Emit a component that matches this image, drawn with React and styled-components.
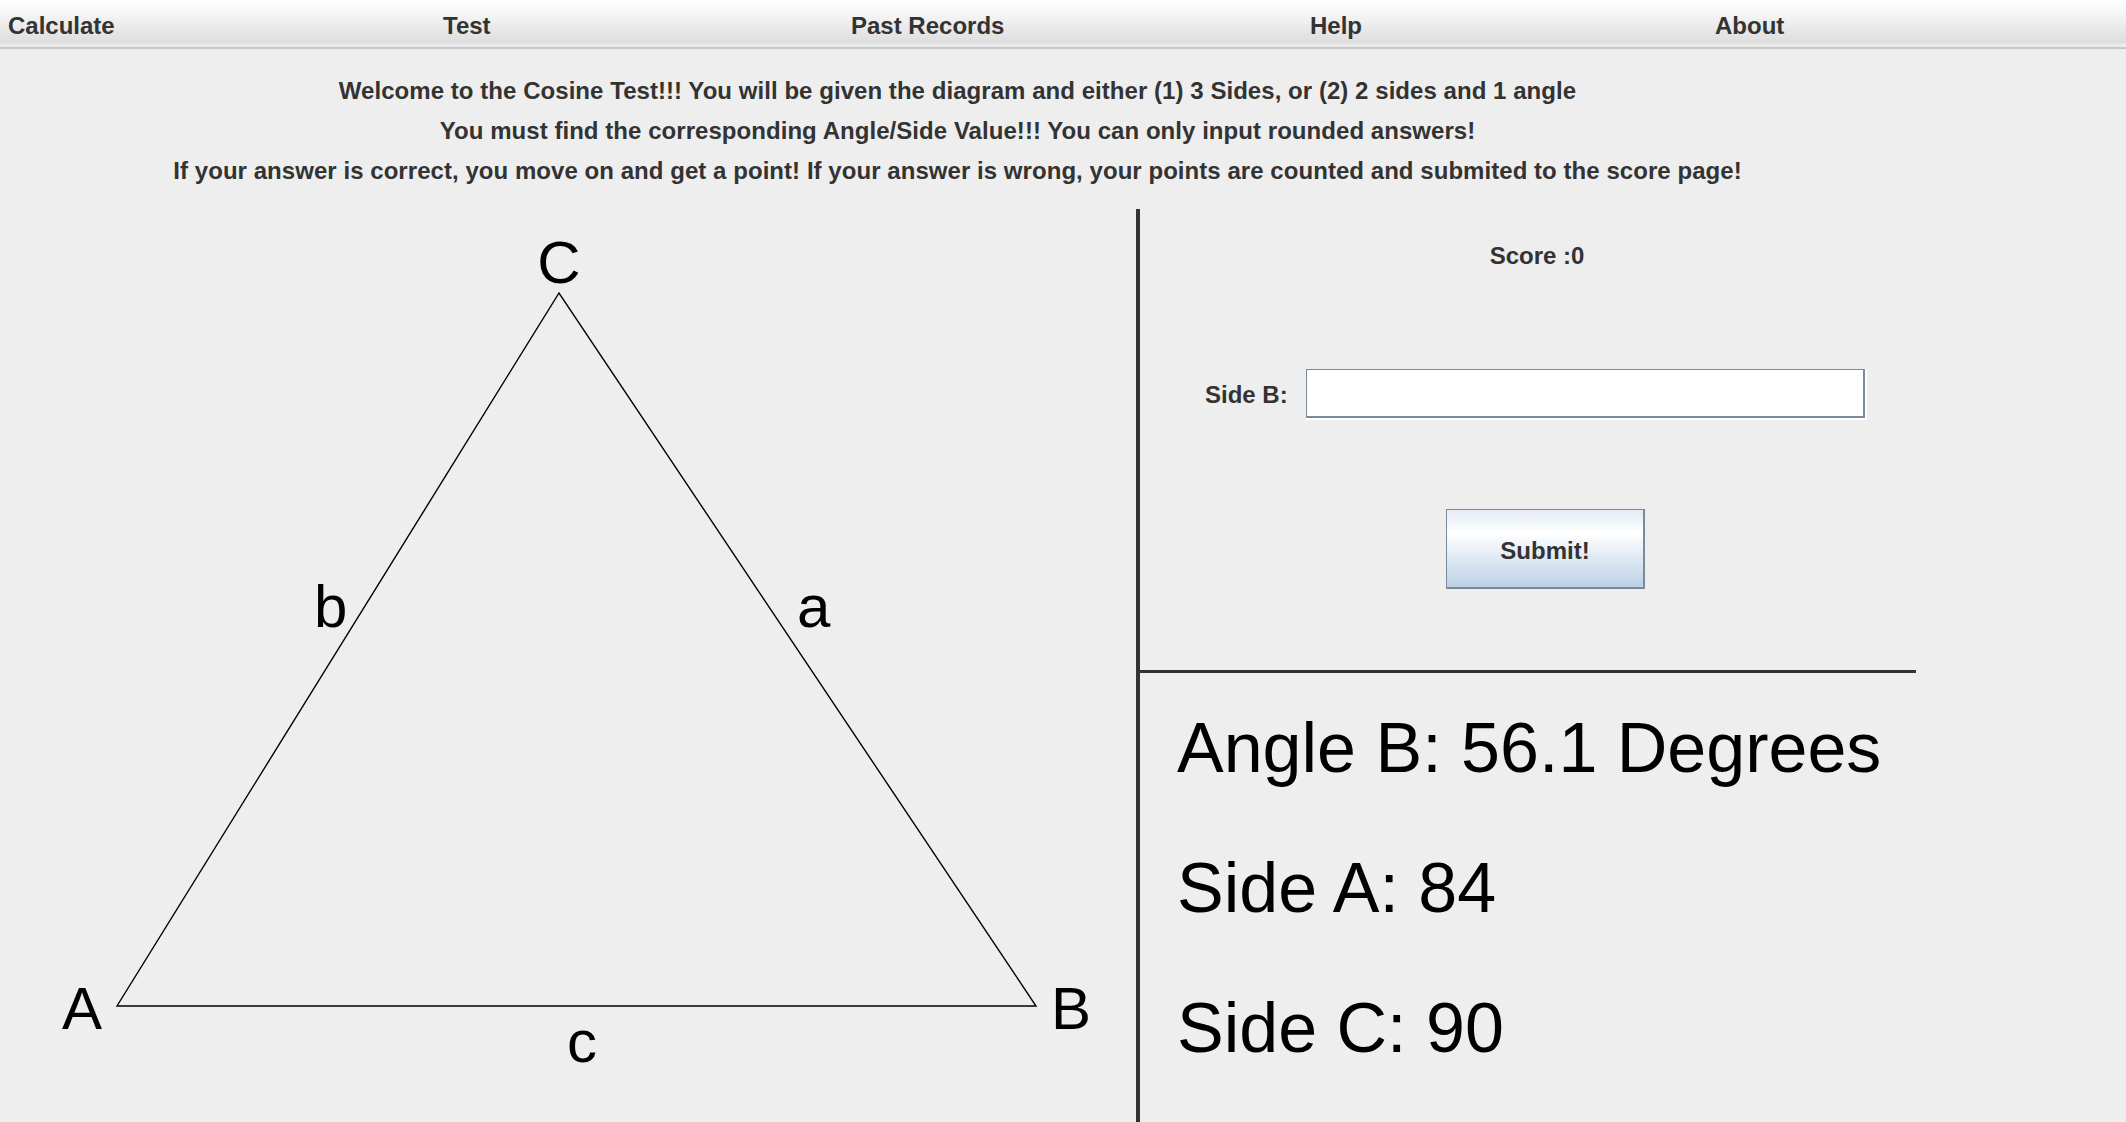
import React from "react";
import styled, { createGlobalStyle } from "styled-components";

const GlobalStyle = createGlobalStyle`
  html, body {
    margin: 0;
    padding: 0;
    background: #eeeeee;
    font-family: "Liberation Sans", Arial, sans-serif;
    overflow: hidden;
  }
  * { box-sizing: border-box; }
`;

const Page = styled.div`
  width: 2126px;
  height: 1122px;
  background: #eeeeee;
  display: flex;
  flex-direction: column;
`;

const MenuBar = styled.nav`
  height: 49px;
  padding-left: 8px;
  display: grid;
  grid-template-columns: 435px 408px 459px 405px auto;
  align-items: center;
  background: linear-gradient(to bottom, #ffffff 0%, #f1f1f1 40%, #dddddd 92%, #eaeaea 93%, #eaeaea 100%);
  border-bottom: 2px solid #c9c9c9;
`;

const MenuItem = styled.div`
  font-size: 24px;
  font-weight: bold;
  color: #333333;
  line-height: 47px;
  padding-top: 2px;
  white-space: nowrap;
`;

const Header = styled.header`
  width: 1915px;
  padding-top: 22px;
  height: 160px;
  text-align: center;
`;

const InfoLine = styled.p`
  margin: 0;
  font-size: 24px;
  font-weight: bold;
  color: #333333;
  line-height: 40px;
  letter-spacing: 0.05px;
  white-space: nowrap;
`;

const Main = styled.main`
  flex: 1;
  display: flex;
  min-height: 0;
`;

const DiagramPanel = styled.section`
  width: 1140px;
  border-right: 4px solid #333333;
  height: 100%;
`;

const SidePanel = styled.section`
  width: 776px;
  display: flex;
  flex-direction: column;
`;

const QuizArea = styled.div`
  height: 464px;
  border-bottom: 3px solid #333333;
  display: flex;
  flex-direction: column;
`;

const ScoreRow = styled.div`
  height: 94px;
  display: flex;
  align-items: center;
  justify-content: center;
  padding-left: 18px;
  font-size: 24px;
  font-weight: bold;
  color: #333333;
`;

const FieldRow = styled.div`
  margin-top: 66px;
  height: 49px;
  display: grid;
  grid-template-columns: 101px 559px;
  align-items: center;
  padding-left: 65px;
`;

const FieldLabel = styled.label`
  font-size: 24px;
  font-weight: bold;
  color: #333333;
  padding-top: 2px;
`;

const TextField = styled.input`
  width: 559px;
  height: 49px;
  background: #ffffff;
  border-style: solid;
  border-color: #7a8a99;
  border-width: 1px 2px 2px 1px;
  box-shadow: 1px 1px 0 1px #ffffff;
  outline: none;
  font-family: "Liberation Sans", Arial, sans-serif;
  font-size: 22px;
  padding: 0 6px;
`;

const SubmitButton = styled.button`
  margin-top: 91px;
  margin-left: 306px;
  width: 199px;
  height: 80px;
  border-style: solid;
  border-color: #7a8a99;
  border-width: 1px 2px 2px 1px;
  background: linear-gradient(to bottom, #e3ebf5 0%, #ffffff 30%, #e6eef7 55%, #bcd1e5 100%);
  font-family: "Liberation Sans", Arial, sans-serif;
  font-size: 24px;
  font-weight: bold;
  color: #333333;
  padding: 4px 0 0;
  cursor: pointer;
`;

const ResultArea = styled.div`
  flex: 1;
  padding-top: 5px;
  padding-left: 37px;
`;

const ResultLine = styled.div`
  font-size: 70px;
  line-height: 140px;
  color: #000000;
  white-space: nowrap;
`;

const Diagram = styled.svg`
  display: block;
  width: 1136px;
  height: 913px;
`;

const Label = styled.text`
  font-family: "Liberation Sans", Arial, sans-serif;
  font-size: 60px;
  fill: #000000;
`;

const menu = ["Calculate", "Test", "Past Records", "Help", "About"];

const info = [
  "Welcome to the Cosine Test!!! You will be given the diagram and either (1) 3 Sides, or (2) 2 sides and 1 angle",
  "You must find the corresponding Angle/Side Value!!! You can only input rounded answers!",
  "If your answer is correct, you move on and get a point! If your answer is wrong, your points are counted and submited to the score page!",
];

const results = ["Angle B: 56.1 Degrees", "Side A: 84", "Side C: 90"];

const labels = [
  { t: "C", x: 559, y: 283, anchor: "middle" },
  { t: "b", x: 314, y: 627 },
  { t: "a", x: 797, y: 627 },
  { t: "A", x: 62, y: 1029 },
  { t: "B", x: 1051, y: 1029 },
  { t: "c", x: 567, y: 1062 },
];

export default function App() {
  return (
    <Page>
      <GlobalStyle />
      <MenuBar>
        {menu.map((m) => (
          <MenuItem key={m}>{m}</MenuItem>
        ))}
      </MenuBar>
      <Header>
        {info.map((l) => (
          <InfoLine key={l}>{l}</InfoLine>
        ))}
      </Header>
      <Main>
        <DiagramPanel>
          <Diagram viewBox="0 209 1136 913">
            <polygon
              points="117,1006 1036,1006 559,293"
              fill="none"
              stroke="#000"
              strokeWidth="1.4"
            />
            {labels.map((l) => (
              <Label key={l.t} x={l.x} y={l.y} textAnchor={l.anchor || "start"}>
                {l.t}
              </Label>
            ))}
          </Diagram>
        </DiagramPanel>
        <SidePanel>
          <QuizArea>
            <ScoreRow>Score :0</ScoreRow>
            <FieldRow>
              <FieldLabel htmlFor="sideb">Side B:</FieldLabel>
              <TextField id="sideb" type="text" />
            </FieldRow>
            <SubmitButton>Submit!</SubmitButton>
          </QuizArea>
          <ResultArea>
            {results.map((r) => (
              <ResultLine key={r}>{r}</ResultLine>
            ))}
          </ResultArea>
        </SidePanel>
      </Main>
    </Page>
  );
}
